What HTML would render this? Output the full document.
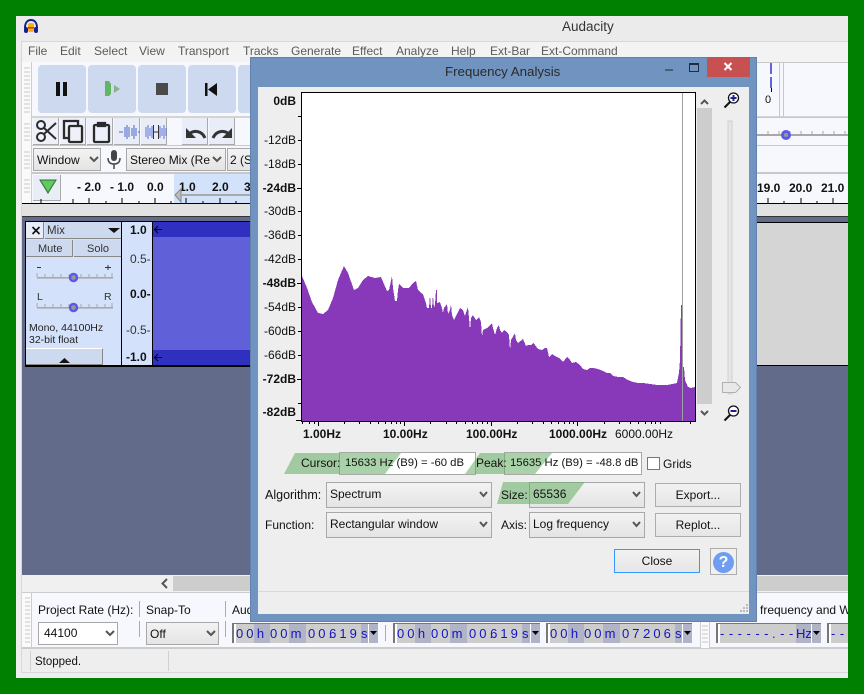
<!DOCTYPE html>
<html><head><meta charset="utf-8"><style>
html,body{margin:0;padding:0}
body{width:864px;height:694px;position:relative;overflow:hidden;background:#008000;font-family:"Liberation Sans",sans-serif;font-size:12px;color:#111}
.a,.t{position:absolute}
.t{white-space:nowrap;line-height:14px}
.m{color:#5a5a5a;top:44px;font-size:12px}
.b{background:#cdd9ef;border-radius:4px;top:65px;width:48px;height:48px}
.e{background:#e8edf7;border-right:1px solid #aaa;border-bottom:1px solid #aaa;top:118px;width:25px;height:26px}
.c{background:linear-gradient(#f3f3f3,#e4e4e4);border:1px solid #a8a8a8;box-sizing:border-box}
.y{right:568px;font-size:12px}
.yb{font-weight:bold}
.x{top:427px;font-weight:bold;font-size:12px}
.tf{position:absolute;top:623px;height:20px;background:#fff;box-sizing:border-box;border-top:1px solid #777;border-left:2px solid #777;display:flex;color:#1414c4;font-size:13px;line-height:19px;letter-spacing:3px;padding-left:2px;overflow:hidden}
.tf span{display:block;background:#cdcdcd;text-align:center;height:19px;white-space:nowrap}
.tf span.d{background:#b0b4c6}
.tf span.l{text-align:left;padding-left:2px;box-sizing:border-box;position:relative;z-index:1}
.dbtn{background:linear-gradient(#f2f2f2,#e6e6e6);border:1px solid #adadad;box-sizing:border-box;text-align:center;line-height:22px;font-size:12px}
</style></head><body>
<div class="a" style="left:16px;top:16px;width:832px;height:662px;background:#eeeeee"></div>
<div class="a" style="left:16px;top:16px;width:832px;height:25px;background:#ebebeb"></div>
<div class="t" style="left:562px;top:20px;font-size:13.5px;color:#333">Audacity</div>
<svg class="a" style="left:23px;top:19px" width="16" height="15" viewBox="0 0 16 15"><path d="M2 9C2 3 5 1 8 1s6 2 6 8" fill="none" stroke="#12208c" stroke-width="2"/><rect x="1" y="8" width="4" height="6" rx="2" fill="#12208c"/><rect x="11" y="8" width="4" height="6" rx="2" fill="#12208c"/><rect x="5" y="4" width="6" height="9" rx="2" fill="#f4b018"/><rect x="5" y="8" width="6" height="1.5" fill="#d8301c"/></svg>

<div class="a" style="left:21px;top:41px;width:827px;height:21px;background:#f3f3f3;border-top:1px solid #d8d8d8;border-left:1px solid #d8d8d8;box-sizing:border-box"></div>
<span class="t m" style="left:28px">File</span><span class="t m" style="left:60px">Edit</span><span class="t m" style="left:94px">Select</span><span class="t m" style="left:139px">View</span><span class="t m" style="left:178px">Transport</span><span class="t m" style="left:243px">Tracks</span><span class="t m" style="left:291px">Generate</span><span class="t m" style="left:352px">Effect</span><span class="t m" style="left:396px">Analyze</span><span class="t m" style="left:451px">Help</span><span class="t m" style="left:490px">Ext-Bar</span><span class="t m" style="left:541px">Ext-Command</span>

<!-- toolbars -->
<div class="a" style="left:21px;top:62px;width:827px;height:142px;background:#f7f8fe"></div>
<div class="a" style="left:21px;top:116px;width:827px;height:2px;background:#d4d4d4"></div>
<div class="a" style="left:21px;top:145px;width:827px;height:1px;background:#c8c8c8"></div>
<div class="a" style="left:21px;top:172px;width:827px;height:2px;background:#c8c8c8"></div>
<div class="a" style="left:21px;top:62px;width:11px;height:142px;background:#fafafa;border-right:1px solid #ccc;box-sizing:border-box"></div>
<svg class="a" style="left:24px;top:64px" width="6" height="134"><path d="M0 4h6M0 8h6M0 12h6M0 16h6M0 20h6M0 24h6M0 28h6M0 32h6M0 36h6M0 40h6M0 44h6M0 48h6M0 60h6M0 64h6M0 68h6M0 72h6M0 76h6M0 88h6M0 92h6M0 96h6M0 100h6M0 104h6M0 116h6M0 120h6M0 124h6M0 128h6" stroke="#c8c8c8"/></svg>

<div class="a b" style="left:38px"></div><div class="a b" style="left:88px"></div><div class="a b" style="left:138px"></div><div class="a b" style="left:188px"></div><div class="a b" style="left:238px"></div>
<svg class="a" style="left:0;top:0" width="864" height="120">
<path d="M56 82h4v14h-4zM63 82h4v14h-4z" fill="#111"/>
<path d="M105 81h4l2 3v10l-2 2h-4z" fill="#63b463"/><path d="M114 85l6 4-6 4z" fill="#86b486"/>
<rect x="156" y="83" width="12" height="12" fill="#4a4a4a"/>
<path d="M205 83h2.500v13H205zM217 83v13l-9-6.500z" fill="#111"/>
</svg>
<div class="a e" style="left:33px;background:#eef1fa"></div><div class="a e" style="left:60px;background:#eef1fa"></div><div class="a e" style="left:87px;background:#eef1fa"></div><div class="a e" style="left:114px"></div><div class="a e" style="left:141px"></div><div class="a e" style="left:182px"></div><div class="a e" style="left:209px"></div>
<svg class="a" style="left:0;top:0" width="864" height="210">
<g fill="none" stroke="#2b2b2b" stroke-width="2"><circle cx="41" cy="125" r="4"/><circle cx="41" cy="137" r="4"/><path d="M44 128l12 11M44 134l12-11"/></g>
<g fill="none" stroke="#2b2b2b" stroke-width="2.300"><path d="M68 138h-4v-17h14v4"/><rect x="69" y="126" width="13" height="16" rx="1"/></g>
<g fill="none" stroke="#2b2b2b" stroke-width="2.300"><rect x="94" y="125" width="15" height="17" rx="1"/><path d="M98 123h7v3h-7z"/></g>
<path d="M119 132h4M125 127v10M127 125v14M129 127v10M132 128v8M134 125v14M136 128v8M138 132h2" stroke="#4a62c8" fill="none"/>
<path d="M146 127v10M148 125v14M150 128v8M152 126v12M160 126v12M162 128v8M164 125v14M166 128v8" stroke="#5a72d8" fill="none"/><path d="M153.500 125v14M158.500 125v14M154 132h4" stroke="#333"/>
<path d="M186 128v10h10z" fill="#333"/><path d="M205 138c-3-7-11-9-17-3" fill="none" stroke="#333" stroke-width="3"/>
<path d="M232 128v10h-10z" fill="#333"/><path d="M213 138c3-7 11-9 17-3" fill="none" stroke="#333" stroke-width="3"/>
<rect x="111" y="150" width="6" height="11" rx="3" fill="#444"/><path d="M108 158c0 5 3 6 6 6s6-1 6-6M114 164v5" fill="none" stroke="#444" stroke-width="1.500"/>
<path d="M40 180h16l-8 13z" fill="#5cc05c" stroke="#2f6f2f"/>
</svg>
<div class="a c" style="left:33px;top:148px;width:68px;height:23px"></div><span class="t" style="left:37px;top:153px;font-size:12px">Window</span>
<div class="a c" style="left:126px;top:148px;width:100px;height:23px"></div><span class="t" style="left:130px;top:153px;font-size:12px">Stereo Mix (Re</span>
<div class="a c" style="left:227px;top:148px;width:30px;height:23px"></div><span class="t" style="left:230px;top:153px;font-size:12px">2 (S</span>
<svg class="a" style="left:0;top:0" width="864" height="210"><path d="M90 157l4 4 4-4M213 157l4 4 4-4" fill="none" stroke="#555" stroke-width="2"/></svg>

<!-- ruler -->
<div class="a" style="left:33px;top:175px;width:27px;height:25px;background:#e8edf7;border-right:1px solid #aaa;border-bottom:1px solid #aaa"></div>
<svg class="a" style="left:33px;top:175px" width="27" height="25"><path d="M7 5h16l-8 13z" fill="#62c862" stroke="#2f6f2f"/></svg>
<div class="a" style="left:174px;top:174px;width:80px;height:29px;background:#d3e2fb"></div>
<div class="a" style="left:22px;top:203px;width:826px;height:1px;background:#000"></div>
<div class="a" style="left:21px;top:204px;width:827px;height:12px;background:#e2e2e2"></div>
<div class="a" style="left:21px;top:216px;width:827px;height:359px;background:#626b8a"></div>
<div class="a" style="left:757px;top:222px;width:91px;height:144px;background:#d5d5d5"></div>
<div class="a" style="left:21px;top:216px;width:827px;height:1px;background:#333"></div>
<div class="a" style="left:757px;top:222px;width:91px;height:1px;background:#000"></div>
<div class="a" style="left:757px;top:365px;width:91px;height:1px;background:#000"></div>
<span class="t" style="left:77px;top:180px;font-weight:bold">- 2.0</span><span class="t" style="left:110px;top:180px;font-weight:bold">- 1.0</span><span class="t" style="left:147px;top:180px;font-weight:bold">0.0</span><span class="t" style="left:179px;top:180px;font-weight:bold">1.0</span><span class="t" style="left:212px;top:180px;font-weight:bold">2.0</span><span class="t" style="left:244px;top:180px;font-weight:bold">3</span>
<span class="t" style="left:757px;top:181px;font-weight:bold">19.0</span><span class="t" style="left:789px;top:181px;font-weight:bold">20.0</span><span class="t" style="left:821px;top:181px;font-weight:bold">21.0</span>
<svg class="a" style="left:0;top:0" width="864" height="210"><path d="M41 199v4M73 199v4M89 198v5M106 201v2M122 198v5M139 201v2M155 198v5M171 201v2M186 198v5M203 201v2M220 198v5M236 201v2M768 198v5M784 201v2M801 198v5M817 201v2M833 198v5" stroke="#000"/><path d="M175 195l6-6v13z" fill="#bdbdbd" stroke="#888"/><rect x="181" y="194" width="75" height="2" fill="#aaa"/></svg>

<!-- top right meter -->
<svg class="a" style="left:0;top:0" width="864" height="210">
<path d="M757 62.500h91M757 117.500h91M757 145.500h91M757 173.500h91M779.500 62v55M783.500 62v55" stroke="#c8c8c8" fill="none"/>
<rect x="770" y="63" width="2" height="11" fill="#6464e0"/><rect x="770" y="77" width="2" height="11" fill="#6464e0"/><rect x="771" y="88" width="1" height="4" fill="#000"/>
<rect x="757" y="134" width="91" height="2" fill="#a8a8a8"/><path d="M768 131v3M779 131v3M790 131v3M801 131v3M812 131v3M823 131v3M834 131v3M845 131v3" stroke="#a8a8a8"/>
<circle cx="786" cy="135" r="3.500" fill="#999" stroke="#5a5ae6" stroke-width="3"/>
</svg>
<span class="t" style="left:765px;top:93px;font-size:11px">0</span>

<!-- track -->
<div class="a" style="left:25px;top:221px;width:232px;height:146px;background:#000"></div>
<div class="a" style="left:26px;top:222px;width:95px;height:143px;background:#d3e1fb"></div>
<div class="a" style="left:26px;top:222px;width:18px;height:17px;background:#e8edf7;border-bottom:1px solid #888;border-right:1px solid #888;box-sizing:border-box"></div>
<div class="a" style="left:45px;top:222px;width:76px;height:17px;background:#cdd9ef;border-bottom:1px solid #888;box-sizing:border-box"></div>
<div class="a" style="left:26px;top:240px;width:47px;height:17px;background:#cdd9ef;border-bottom:1px solid #888;border-right:1px solid #888;box-sizing:border-box"></div>
<div class="a" style="left:74px;top:240px;width:47px;height:17px;background:#cdd9ef;border-bottom:1px solid #888;box-sizing:border-box"></div>
<div class="a" style="left:26px;top:348px;width:77px;height:17px;background:#cdd9ef;border-top:1px solid #fff;border-bottom:1px solid #888;border-right:1px solid #888;box-sizing:border-box"></div>
<span class="t" style="left:47px;top:224px;font-size:11.500px;color:#333">Mix</span>
<span class="t" style="left:38px;top:242px;font-size:11px;color:#333">Mute</span><span class="t" style="left:87px;top:242px;font-size:11px;color:#333">Solo</span>
<span class="t" style="left:29px;top:321px;font-size:10.500px;color:#222">Mono, 44100Hz</span><span class="t" style="left:29px;top:333px;font-size:10.500px;color:#222">32-bit float</span>
<svg class="a" style="left:0;top:210px" width="260" height="160">
<path d="M32.500 17l7 7M39.500 17l-7 7" stroke="#111" stroke-width="1.600"/>
<path d="M108 18h12l-6 5z" fill="#111"/>
<path d="M59 153h11l-5.500-5z" fill="#111"/>
<path d="M37 57.500h4M105 57.500h6M108 55v5" stroke="#333"/>
<rect x="37" y="67" width="76" height="1.600" fill="#a8a8a8"/><rect x="37" y="97" width="76" height="1.600" fill="#a8a8a8"/>
<path d="M37 63v4M45 64v3M53 64v3M61 64v3M69 64v3M81 64v3M89 64v3M97 64v3M105 64v3M112 63v4M37 93v4M45 94v3M53 94v3M61 94v3M69 94v3M81 94v3M89 94v3M97 94v3M105 94v3M112 93v4" stroke="#a8a8a8"/>
<circle cx="73.500" cy="67.500" r="3.500" fill="#999" stroke="#5a5ae6" stroke-width="2.500"/>
<circle cx="73.500" cy="97.500" r="3.500" fill="#999" stroke="#5a5ae6" stroke-width="2.500"/>
</svg>
<span class="t" style="left:37px;top:290px;font-size:10.500px;color:#333">L</span><span class="t" style="left:104px;top:290px;font-size:10.500px;color:#333">R</span>
<div class="a" style="left:122px;top:222px;width:30px;height:143px;background:#d3e1fb"></div>
<span class="t" style="left:130px;top:223px;font-weight:bold">1.0</span><span class="t" style="left:130px;top:252px;color:#333">0.5-</span><span class="t" style="left:130px;top:287px;font-weight:bold">0.0-</span><span class="t" style="left:126px;top:323px;color:#333">-0.5-</span><span class="t" style="left:126px;top:350px;font-weight:bold">-1.0</span>
<div class="a" style="left:153px;top:222px;width:104px;height:143px;background:#6060d8"></div>
<div class="a" style="left:153px;top:222px;width:104px;height:15px;background:#3030c0"></div>
<div class="a" style="left:153px;top:350px;width:104px;height:15px;background:#3030c0"></div>
<svg class="a" style="left:153px;top:222px" width="12" height="143"><path d="M9 7.500H2M5 4L1.500 7.500 5 11M9 135.500H2M5 132l-3.500 3.500L5 139" fill="none" stroke="#000"/></svg>

<!-- h-scroll -->
<div class="a" style="left:21px;top:575px;width:827px;height:18px;background:#f0f0f0"></div>
<div class="a" style="left:173px;top:576px;width:675px;height:15px;background:#cdcdcd"></div>
<svg class="a" style="left:160px;top:578px" width="10" height="12"><path d="M7 1L2.500 5.500 7 10" fill="none" stroke="#555" stroke-width="2"/></svg>

<!-- bottom toolbar -->
<div class="a" style="left:21px;top:592px;width:827px;height:57px;background:#f7f8fe;border-top:1px solid #ccc;border-bottom:2px solid #ccc;box-sizing:border-box"></div>
<div class="a" style="left:22px;top:593px;width:10px;height:54px;background:#fafafa;border-right:1px solid #ccc;box-sizing:border-box"></div>
<div class="a" style="left:700px;top:622px;width:10px;height:26px;background:#fafafa;border-left:1px solid #ccc;border-right:1px solid #ccc;box-sizing:border-box"></div>
<svg class="a" style="left:0;top:590px" width="864" height="60"><path d="M25 8h5M25 12h5M25 16h5M25 20h5M25 24h5M25 28h5M25 32h5M25 36h5M25 40h5M25 44h5M25 48h5M25 52h5M702 36h6M702 40h6M702 44h6M702 48h6M702 52h6" stroke="#c8c8c8"/><path d="M139.500 31v16M225.500 31v16" stroke="#aaa"/></svg>
<span class="t" style="left:38px;top:603px;font-size:12px">Project Rate (Hz):</span>
<div class="a" style="left:139px;top:601px;width:1px;height:16px;background:#aaa"></div>
<span class="t" style="left:146px;top:603px;font-size:12px">Snap-To</span>
<div class="a" style="left:225px;top:601px;width:1px;height:16px;background:#aaa"></div>
<span class="t" style="left:232px;top:603px;font-size:12px">Audio Position</span>
<div class="a" style="left:38px;top:622px;width:80px;height:23px;background:#fff;border:1px solid #a8a8a8;box-sizing:border-box"></div>
<span class="t" style="left:44px;top:626px;font-size:12px">44100</span>
<div class="a c" style="left:146px;top:622px;width:73px;height:23px"></div>
<span class="t" style="left:150px;top:627px;font-size:12px">Off</span>
<svg class="a" style="left:0;top:622px" width="230" height="24"><path d="M106 9l4 4 4-4M207 9l4 4 4-4" fill="none" stroke="#555" stroke-width="2"/></svg>

<div class="tf" style="left:232px;width:146px"><span style="width:18px">00</span><span class="d" style="width:16px">h</span><span style="width:19px">00</span><span class="d" style="width:17px">m</span><span class="l" style="width:22px">00.</span><span style="width:33px">619</span><span class="d" style="width:9px">s</span></div>
<div class="tf" style="left:393px;width:147px"><span style="width:18px">00</span><span class="d" style="width:16px">h</span><span style="width:19px">00</span><span class="d" style="width:17px">m</span><span class="l" style="width:22px">00.</span><span style="width:33px">619</span><span class="d" style="width:9px">s</span></div>
<div class="tf" style="left:546px;width:146px"><span style="width:18px">00</span><span class="d" style="width:16px">h</span><span style="width:19px">00</span><span class="d" style="width:17px">m</span><span class="l" style="width:22px">07.</span><span style="width:33px">206</span><span class="d" style="width:9px">s</span></div>
<div class="tf" style="left:716px;width:105px;letter-spacing:4.500px"><span style="width:52px">------</span><span style="width:24px">.--</span><span class="d" style="width:16px;letter-spacing:0">Hz</span></div>
<div class="tf" style="left:827px;width:21px;letter-spacing:4.500px"><span style="width:20px">--</span></div>
<svg class="a" style="left:0;top:622px" width="864" height="24"><g><rect x="368" y="2" width="10" height="19" fill="#b0b4c6"/><rect x="368" y="2" width="1" height="19" fill="#fff"/><path d="M370 9h7l-3.500 4z" fill="#000"/><rect x="530" y="2" width="10" height="19" fill="#b0b4c6"/><rect x="530" y="2" width="1" height="19" fill="#fff"/><path d="M532 9h7l-3.500 4z" fill="#000"/><rect x="682" y="2" width="10" height="19" fill="#b0b4c6"/><rect x="682" y="2" width="1" height="19" fill="#fff"/><path d="M684 9h7l-3.500 4z" fill="#000"/><rect x="811" y="2" width="10" height="19" fill="#b0b4c6"/><rect x="811" y="2" width="1" height="19" fill="#fff"/><path d="M813 9h7l-3.500 4z" fill="#000"/></g><path d="M385.500 3v16" stroke="#aaa"/></svg>
<span class="t" style="left:760px;top:603px;font-size:12px">frequency and W</span>
<div class="a" style="left:848px;top:0;width:16px;height:694px;background:#008000"></div>

<!-- status -->
<div class="a" style="left:21px;top:649px;width:827px;height:24px;background:#eeeeee;border-bottom:1px solid #d8d8d8;box-sizing:border-box"></div>
<div class="a" style="left:30px;top:651px;width:1px;height:20px;background:#d0d0d0"></div>
<div class="a" style="left:168px;top:651px;width:1px;height:20px;background:#d0d0d0"></div>
<span class="t" style="left:35px;top:655px;font-size:11.500px">Stopped.</span>
<div class="a" style="left:21px;top:41px;width:1px;height:632px;background:#d8d8d8"></div>

<!-- dialog -->
<div class="a" style="left:250px;top:57px;width:507px;height:565px;background:#7094bf;border:1px solid #5f83ad;box-sizing:border-box"></div>
<div class="a" style="left:258px;top:87px;width:491px;height:527px;background:#eeeeee"></div>
<span class="t" style="left:445px;top:65px;font-size:13.300px;color:#2a2a2a">Frequency Analysis</span>
<div class="a" style="left:707px;top:57px;width:43px;height:20px;background:#c75050"></div>
<svg class="a" style="left:660px;top:57px" width="90" height="20"><path d="M5 13h8" stroke="#4a5e7a" stroke-width="2"/><rect x="29.500" y="6.500" width="9" height="8" fill="none" stroke="#1f2d44"/><rect x="29.500" y="6" width="9" height="2" fill="#1f2d44"/><path d="M64.500 6l7 7M71.500 6l-7 7" stroke="#fff" stroke-width="2"/></svg>

<!-- plot -->
<svg class="a" style="left:0;top:0" width="864" height="450">
<rect x="301.500" y="92.500" width="394" height="329" fill="#fff" stroke="#000"/>
<polygon fill="#8839b9" shape-rendering="crispEdges" points="302,421 302,276 307,288 312,302 318,313 323,314 328,310 333,298 338,280 344,266 348,273 354,290 358,288 363,280 368,276 375,278 381,277 387,291 389,290 391,281 392,276 393,288 395,301 397,301 398,290 399,284 402,287 403,288 409,288 413,283 416,281 418,290 421,293 423,294 426,303 427,308 429,308 430,295 431,308 432,308 433,295 434,308 435,305 436,290 437,290 437,303 440,302 442,308 443,313 444,308 447,304 448,314 450,310 451,304 452,315 454,320 457,314 460,308 463,310 465,316 468,307 469,318 470,330 471,318 473,315 476,320 479,317 481,322 482,337 483,330 487,328 492,323 493,328 495,335 497,328 499,325 500,330 502,333 504,330 507,332 509,335 510,350 511,340 515,333 516,340 518,343 523,339 526,346 528,345 531,345 533,343 535,345 538,349 542,350 545,348 547,348 549,357 552,354 555,356 559,358 563,362 567,357 570,360 572,363 576,362 580,365 583,369 587,370 590,368 593,368 598,369 603,371 607,373 610,373 613,376 618,377 623,377 628,380 633,382 638,383 643,383 650,384 657,385 662,385 667,385 672,384 677,383 679,373 680,360 681,305 682,305 682.500,367 684,367 685,380 688,387 691,388 695,387 695,421"/>
<rect x="682" y="93" width="1" height="328" fill="#a0a0a0"/>
<path d="M301.500 92v330M301 421.500h395M695.500 92v330M301 92.500h395" stroke="#000" fill="none"/>
<path d="M298 116.500h3M298 140.500h3M298 164.500h3M297 188.500h4M298 211.500h3M298 235.500h3M298 259.500h3M297 283.500h4M298 307.500h3M298 331.500h3M298 355.500h3M297 379.500h4M298 403.500h3M296 420.500h5" stroke="#000"/>
<path d="M302.500 422v2M309.500 422v2M314.500 422v2M318.500 422v4M344.500 422v2M359.500 422v2M370.500 422v2M378.500 422v2M385.500 422v2M391.500 422v2M396.500 422v2M400.500 422v2M404.500 422v4M430.500 422v2M446.500 422v2M456.500 422v2M465.500 422v2M472.500 422v2M477.500 422v2M482.500 422v2M487.500 422v2M491.500 422v4M517.500 422v2M532.500 422v2M543.500 422v2M551.500 422v2M558.500 422v2M564.500 422v2M569.500 422v2M573.500 422v2M577.500 422v4M604.500 422v2M619.500 422v2M630.500 422v2M638.500 422v2M645.500 422v2M651.500 422v2M655.500 422v2M660.500 422v2M690.500 422v2" stroke="#000"/>
<rect x="697" y="108" width="15" height="296" fill="#cdcdcd"/>
<path d="M701 104l3.500-3.500L708 104M701 411l3.500 3.500L708 411" fill="none" stroke="#555" stroke-width="2"/>
<rect x="728" y="121" width="4" height="273" fill="#e4e6e4" stroke="#d0d0d0"/>
<path d="M722.500 382.500h13l5 5-5 5h-13z" fill="#e8e8e8" stroke="#b0b0b0"/>
<g fill="none"><circle cx="733.500" cy="98" r="5" fill="#fff" stroke="#111" stroke-width="1.300"/><path d="M730 102l-5.500 5.500" stroke="#111" stroke-width="2"/><path d="M730.500 98h6M733.500 95v6" stroke="#20209a" stroke-width="2"/></g>
<g fill="none"><circle cx="733.500" cy="411" r="5" fill="#fff" stroke="#111" stroke-width="1.300"/><path d="M730 415l-5.500 5.500" stroke="#111" stroke-width="2"/><path d="M730.500 411h6" stroke="#20209a" stroke-width="2"/></g>
</svg>
<span class="t y yb" style="top:94px">0dB</span>
<span class="t y" style="top:133px">-12dB</span><span class="t y" style="top:157px">-18dB</span><span class="t y yb" style="top:181px">-24dB</span><span class="t y" style="top:204px">-30dB</span><span class="t y" style="top:228px">-36dB</span><span class="t y" style="top:252px">-42dB</span><span class="t y yb" style="top:276px">-48dB</span><span class="t y" style="top:300px">-54dB</span><span class="t y" style="top:324px">-60dB</span><span class="t y" style="top:348px">-66dB</span><span class="t y yb" style="top:372px">-72dB</span><span class="t y yb" style="top:405px">-82dB</span>
<span class="t x" style="left:303px">1.00Hz</span><span class="t x" style="left:383px">10.00Hz</span><span class="t x" style="left:466px">100.00Hz</span><span class="t x" style="left:549px">1000.00Hz</span><span class="t x" style="left:615px;font-weight:normal">6000.00Hz</span>

<!-- readouts -->
<div class="a" style="left:339px;top:452px;width:137px;height:23px;background:#fff;border:1px solid #a8a8a8;box-sizing:border-box"></div>
<div class="a" style="left:504px;top:452px;width:138px;height:23px;background:#fff;border:1px solid #a8a8a8;box-sizing:border-box"></div>
<div class="a" style="left:529px;top:482px;width:116px;height:26px;background:linear-gradient(#f3f3f3,#e4e4e4);border:1px solid #a8a8a8;box-sizing:border-box"></div>
<svg class="a" style="left:0;top:440px" width="864" height="80"><path d="M284 34l11-21h106l-16 21z" fill="#62ad62" fill-opacity=".55"/><path d="M465 34l15-21h72l-17 21z" fill="#62ad62" fill-opacity=".55"/><path d="M497 64l6-22h82l-17 22z" fill="#62ad62" fill-opacity=".55"/></svg>
<span class="t" style="left:301px;top:456px">Cursor:</span><span class="t" style="left:345px;top:456px;font-size:11.300px">15633 Hz (B9) = -60 dB</span>
<span class="t" style="left:476px;top:456px">Peak:</span><span class="t" style="left:510px;top:456px;font-size:11.300px">15635 Hz (B9) = -48.8 dB</span>
<div class="a" style="left:647px;top:457px;width:13px;height:13px;background:#fff;border:1px solid #777;box-sizing:border-box"></div>
<span class="t" style="left:663px;top:457px">Grids</span>

<span class="t" style="left:265px;top:488px;font-size:12.500px">Algorithm:</span>
<span class="t" style="left:265px;top:518px">Function:</span>
<div class="a c" style="left:326px;top:482px;width:166px;height:26px"></div>
<div class="a c" style="left:326px;top:512px;width:166px;height:26px"></div>
<span class="t" style="left:330px;top:487px">Spectrum</span><span class="t" style="left:330px;top:517px">Rectangular window</span>
<span class="t" style="left:501px;top:488px">Size:</span><span class="t" style="left:501px;top:518px">Axis:</span>
<div class="a c" style="left:529px;top:512px;width:116px;height:26px"></div>
<span class="t" style="left:533px;top:487px">65536</span><span class="t" style="left:533px;top:517px">Log frequency</span>
<svg class="a" style="left:0;top:480px" width="864" height="60"><path d="M480 12l3.500 4 3.500-4M480 42l3.500 4 3.500-4M633 12l3.500 4 3.500-4M633 42l3.500 4 3.500-4" fill="none" stroke="#555" stroke-width="2"/></svg>

<div class="a dbtn" style="left:655px;top:483px;width:86px;height:24px">Export...</div>
<div class="a dbtn" style="left:655px;top:513px;width:86px;height:24px">Replot...</div>
<div class="a dbtn" style="left:614px;top:549px;width:86px;height:24px;border-color:#3399ff">Close</div>
<div class="a" style="left:710px;top:548px;width:27px;height:27px;background:#f0f0f0;border:1px solid #adadad;box-sizing:border-box"></div>
<div class="a" style="left:713px;top:551.500px;width:21px;height:21px;border-radius:50%;background:#6f9df2;color:#fff;font-weight:bold;font-size:16px;line-height:21px;text-align:center">?</div>
<div class="a" style="left:258px;top:591px;width:491px;height:1px;background:#d9d9d9"></div>
<svg class="a" style="left:738px;top:603px" width="11" height="11"><path d="M8 1h2v2H8zM5 4h2v2H5zM8 4h2v2H8zM2 7h2v2H2zM5 7h2v2H5zM8 7h2v2H8z" fill="#bdbdbd"/></svg>
</body></html>
